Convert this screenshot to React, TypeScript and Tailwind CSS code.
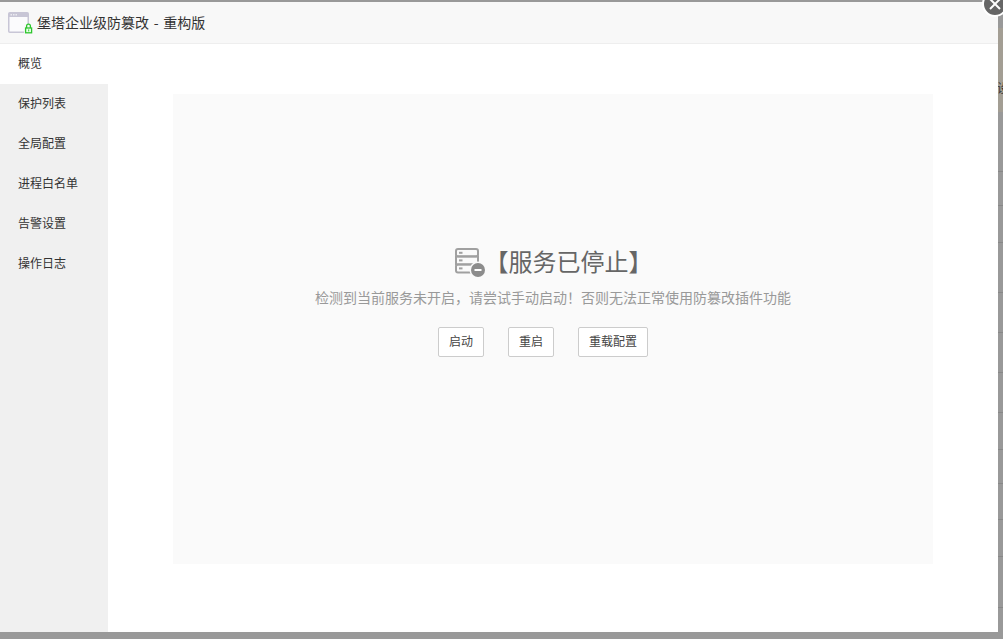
import React from 'react'

const menu = ['概览', '保护列表', '全局配置', '进程白名单', '告警设置', '操作日志']
const actions = ['启动', '重启', '重载配置']

function WindowLockIcon() {
  return (
    <svg width="26" height="22" viewBox="0 0 26 22" className="shrink-0">
      <rect x="0.75" y="0.75" width="19.5" height="19.5" rx="1" fill="#fbfbfd" stroke="#c8c6d6" strokeWidth="1.5" />
      <rect x="1" y="1" width="19" height="4" fill="#c8c6d6" />
      <rect x="2.5" y="2.2" width="1.5" height="1.2" fill="#f4f4f8" />
      <rect x="5" y="2.2" width="1.5" height="1.2" fill="#f4f4f8" />
      <rect x="7.5" y="2.2" width="1.5" height="1.2" fill="#f4f4f8" />
      <rect x="16" y="12" width="9" height="10" fill="#f8f8f8" />
      <path d="M18.6 16v-2a1.9 1.9 0 0 1 3.8 0v2" fill="none" stroke="#2ec52e" strokeWidth="1.3" />
      <rect x="17.6" y="16" width="6" height="4.8" fill="#eaffea" stroke="#2ec52e" strokeWidth="1.3" />
      <rect x="20.2" y="17.4" width="1" height="2" fill="#2ec52e" />
    </svg>
  )
}

function ServerStoppedIcon() {
  return (
    <svg width="32" height="30" viewBox="0 0 32 30" className="shrink-0">
      <g fill="none" stroke="#a0a0a0" strokeWidth="2">
        <rect x="2" y="2" width="22" height="7.4" rx="2" />
        <rect x="2" y="9.4" width="22" height="8" />
        <rect x="2" y="17.4" width="22" height="8" rx="2" />
      </g>
      <g fill="#a0a0a0">
        <rect x="5" y="4.8" width="3.5" height="2" />
        <rect x="5" y="12.4" width="3.5" height="2" />
        <rect x="5" y="20.4" width="3.5" height="2" />
      </g>
      <circle cx="24" cy="23" r="8.5" fill="#fafafa" />
      <circle cx="24" cy="23" r="7" fill="#8c8c8c" />
      <rect x="20.5" y="22" width="7" height="2" fill="#fff" />
    </svg>
  )
}

export default function App() {
  return (
    <div className="relative flex h-[639px] w-[1003px] overflow-hidden bg-[#999999] font-['Noto_Sans_CJK_SC',sans-serif]">
      <div className="flex w-[998px] shrink-0 flex-col pt-[2px] pb-[7px]">
        <div className="flex h-full flex-col bg-white">
          <div className="flex h-[42px] shrink-0 items-center gap-[3px] border-b border-[#eeeeee] bg-[#f8f8f8] pl-[8px] text-[14px] text-[#333333]">
            <WindowLockIcon />
            <span className="pb-[2px] leading-none [word-spacing:1.5px]">堡塔企业级防篡改 - 重构版</span>
          </div>
          <div className="flex min-h-0 flex-1">
            <div className="flex w-[108px] shrink-0 flex-col bg-[#f0f0f0]">
              {menu.map((item, i) => (
                <div
                  key={item}
                  className={`flex h-[40px] items-center pb-[2px] pl-[18px] text-[12px] text-[#333333] ${i === 0 ? 'bg-white' : ''}`}
                >
                  {item}
                </div>
              ))}
            </div>
            <div className="flex-1 px-[65px] pt-[50px]">
              <div className="flex h-[470px] flex-col items-center bg-[#fafafa] pt-[152px]">
                <div className="flex h-[32px] items-center">
                  <ServerStoppedIcon />
                  <span className="ml-[-1px] pb-[2px] text-[24px] leading-[32px] text-[#666666]">【服务已停止】</span>
                </div>
                <p className="mt-[9px] text-[14px] leading-[20px] text-[#999999]">
                  检测到当前服务未开启，请尝试手动启动！否则无法正常使用防篡改插件功能
                </p>
                <div className="mt-[20px] flex gap-[24px] pr-[20px]">
                  {actions.map(a => (
                    <button
                      key={a}
                      className="h-[30px] rounded-[2px] border border-[#cccccc] bg-white px-[10px] pb-[2px] text-[12px] text-[#444444]"
                    >
                      {a}
                    </button>
                  ))}
                </div>
              </div>
            </div>
          </div>
        </div>
      </div>

      {/* what shows of the page behind the dialog */}
      <div className="flex w-[5px] shrink-0 flex-col overflow-hidden">
        <div className="h-[28px] shrink-0" />
        <div className="flex h-[84px] shrink-0 items-start bg-[#a39e94] pt-[54px]">
          <span className="ml-[-1px] text-[12px] leading-none whitespace-nowrap text-[#333333]">设</span>
        </div>
        <div className="h-[60px] shrink-0 border-b border-[#888888]" />
        <div className="h-[34px] shrink-0 border-b border-[#888888]" />
        <div className="h-[37px] shrink-0 border-b border-[#888888]" />
        <div className="h-[50px] shrink-0 border-b border-[#888888]" />
        <div className="h-[40px] shrink-0 border-b border-[#888888]" />
        <div className="h-[40px] shrink-0 border-b border-[#888888]" />
        <div className="h-[40px] shrink-0 border-b border-[#888888]" />
        <div className="h-[37px] shrink-0 border-b border-[#888888]" />
        <div className="h-[34px] shrink-0 border-b border-[#888888]" />
        <div className="h-[36px] shrink-0 border-b border-[#888888]" />
        <div className="h-[37px] shrink-0 border-b border-[#888888]" />
        <div className="h-[51px] shrink-0 border-b border-[#888888]" />
      </div>

      {/* close button hangs over the dialog corner */}
      <div className="absolute top-[-9px] left-[982px] flex h-[26px] w-[26px] items-center justify-center rounded-full border-[2px] border-white bg-[#666666]">
        <svg width="14" height="14" viewBox="0 0 14 14">
          <path d="M2 2l10 10M12 2L2 12" stroke="#fff" strokeWidth="2" />
        </svg>
      </div>
    </div>
  )
}
